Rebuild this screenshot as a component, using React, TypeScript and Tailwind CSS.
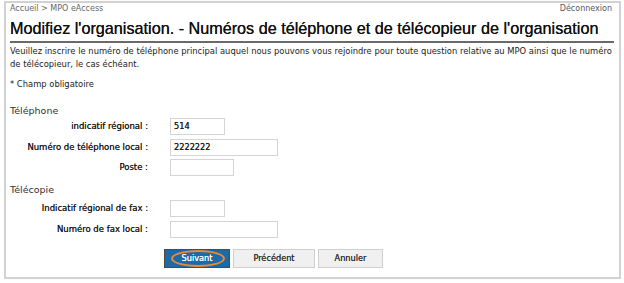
import React from "react";

function Row({ label, value, w, mt }: { label: string; value?: string; w: string; mt: string }) {
  return (
    <div className={`flex items-center ${mt}`}>
      <div className="w-[138px] text-right text-[8.5px] text-[#1a1a1a] [text-shadow:0_0_0.3px_#333]">{label}</div>
      <div
        className={`ml-[22px] h-[17px] ${w} border border-[#d4d4d4] bg-white px-[3px] text-[8.2px] leading-[15px] text-[#1a1a1a] [text-shadow:0_0_0.3px_#333]`}
      >
        {value}
      </div>
    </div>
  );
}

export default function App() {
  return (
    <div className="h-[283px] w-[624px] bg-white pl-[4px] pt-[1px] font-['DejaVu_Sans',Verdana,sans-serif]">
      <div className="h-[278px] w-[617px] border-2 border-[#d2d2d2] pl-[4px] pr-[5px]">
        <div className="flex h-[10px] items-center justify-between pt-[2px] text-[8px] text-[#666]">
          <span>Accueil &gt; MPO eAccess</span>
          <span className="pr-[2px] text-[#556]">Déconnexion</span>
        </div>
        <div className="mt-[6px] whitespace-nowrap border-b-2 border-[#6a6a6a] pb-[3px] font-['Liberation_Sans',Arial,sans-serif] text-[16.2px] leading-[19px] text-[#111] [text-shadow:0_0_0.3px_#111]">
          Modifiez l'organisation. - Numéros de téléphone et de télécopieur de l'organisation
        </div>
        <p className="mt-[2px] text-[8.4px] leading-[13px] text-[#222]">
          Veuillez inscrire le numéro de téléphone principal auquel nous pouvons vous rejoindre pour toute question relative au MPO ainsi que le numéro de télécopieur, le cas échéant.
        </p>
        <p className="mt-[7px] text-[8.4px] leading-[13px] text-[#222]">* Champ obligatoire</p>
        <div className="mt-[13px] text-[9.5px] leading-[14px] text-[#333]">Téléphone</div>
        <Row label="indicatif régional :" value="514" w="w-[55px]" mt="mt-0" />
        <Row label="Numéro de téléphone local :" value="2222222" w="w-[108px]" mt="mt-[4px]" />
        <Row label="Poste :" w="w-[64px]" mt="mt-[3px]" />
        <div className="mt-[7px] text-[9.5px] leading-[14px] text-[#333]">Télécopie</div>
        <Row label="Indicatif régional de fax :" w="w-[55px]" mt="mt-[3px]" />
        <Row label="Numéro de fax local :" w="w-[108px]" mt="mt-[4px]" />
        <div className="ml-[154px] mt-[11px] flex gap-[3px]">
          <button className="relative flex h-[19px] w-[66px] items-center justify-center border border-[#4a4a4a] bg-[#1d6aa9] text-[8.2px] text-white [text-shadow:0_0_0.4px_#fff]">
            Suivant
            <span className="absolute left-[6px] top-[0px] h-[17px] w-[54px] rounded-[50%] border-2 border-[#ec8a2e]" />
          </button>
          <button className="flex h-[19px] w-[82px] items-center justify-center border border-[#cfcfcf] bg-[#f0f0f0] text-[8.2px] text-[#333] [text-shadow:0_0_0.4px_#333]">
            Précédent
          </button>
          <button className="flex h-[19px] w-[65px] items-center justify-center border border-[#cfcfcf] bg-[#f0f0f0] text-[8.2px] text-[#333] [text-shadow:0_0_0.4px_#333]">
            Annuler
          </button>
        </div>
      </div>
    </div>
  );
}
